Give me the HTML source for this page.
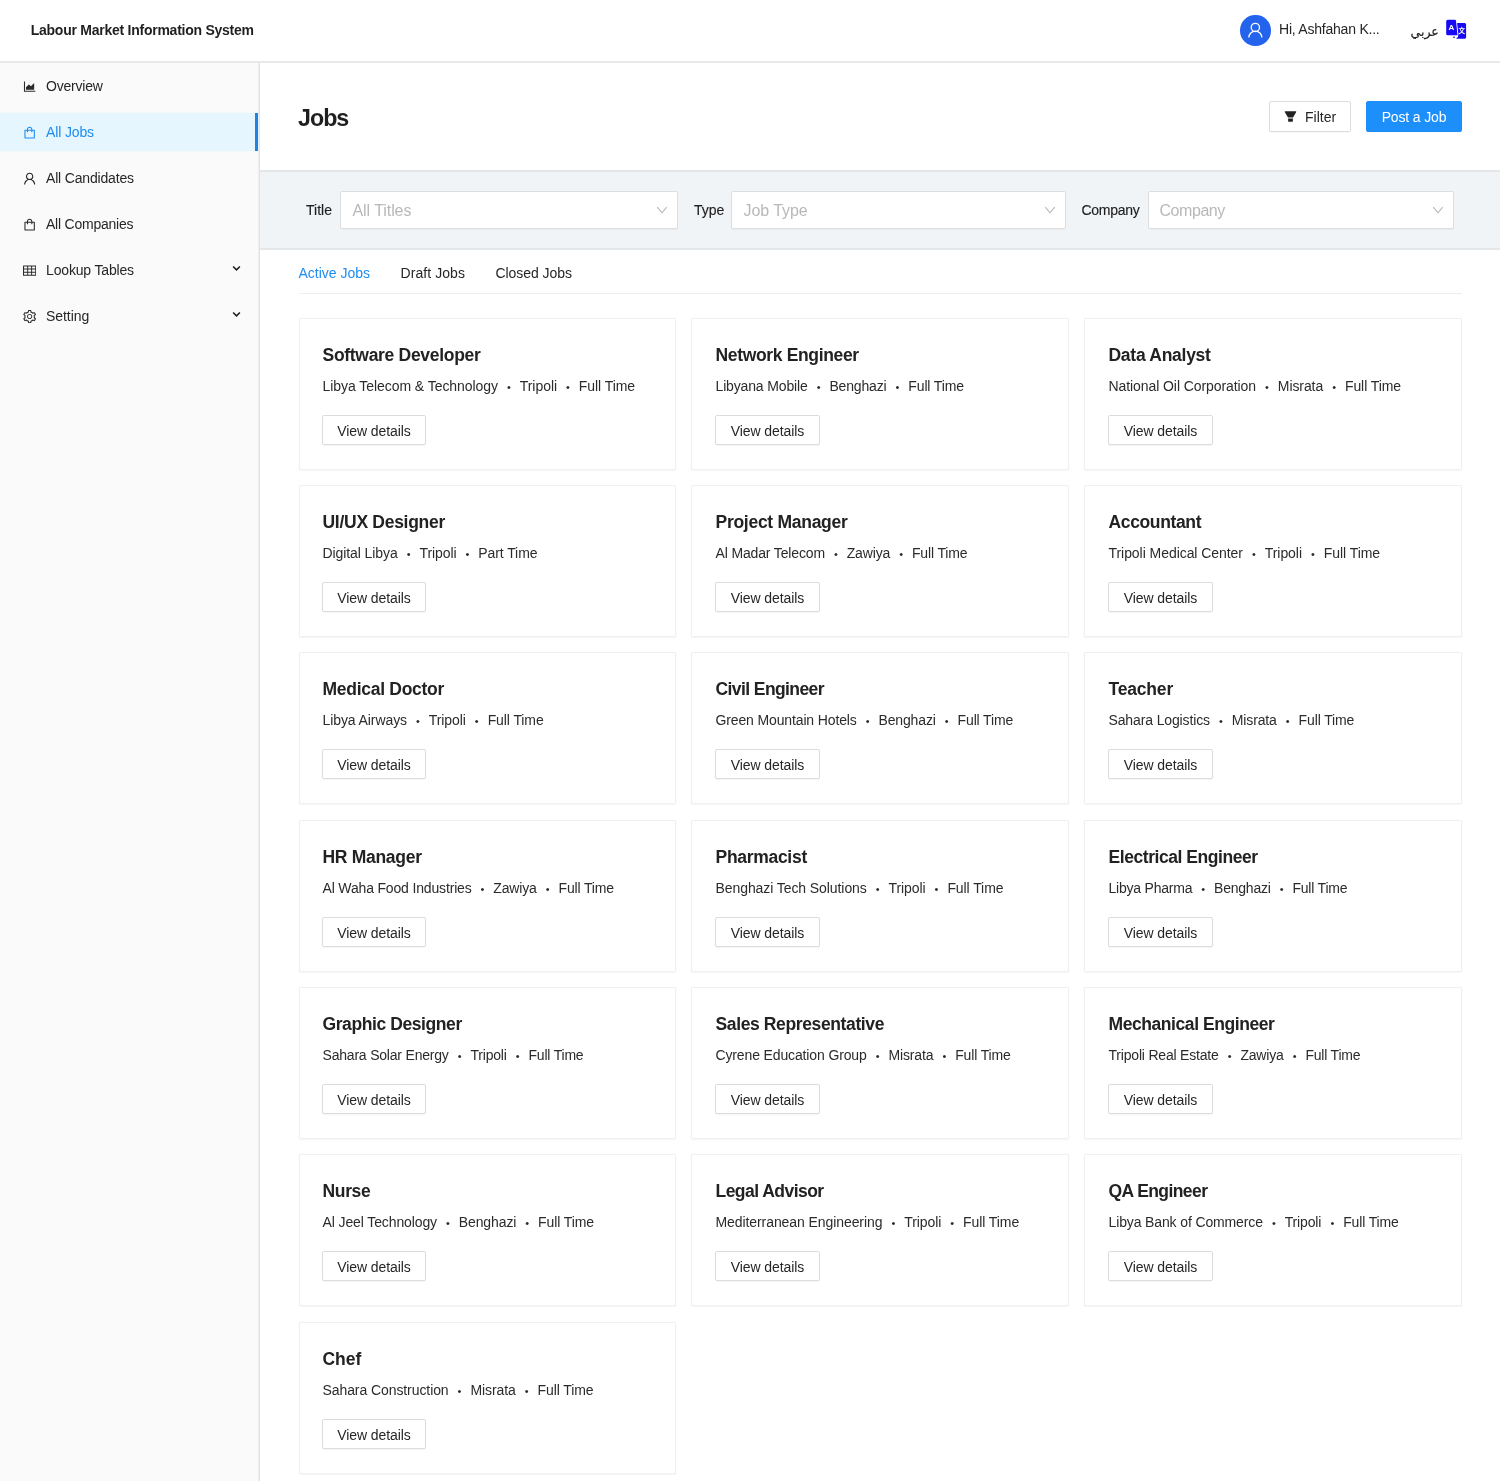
<!DOCTYPE html>
<html lang="en">
<head>
<meta charset="utf-8">
<title>Labour Market Information System - Jobs</title>
<style>
*{box-sizing:border-box;margin:0;padding:0}
html,body{width:1500px;height:1481px;overflow:hidden;background:#fff}
body{will-change:transform;font-family:"Liberation Sans",sans-serif;font-size:14px;color:rgba(0,0,0,.85);position:relative;-webkit-font-smoothing:antialiased}
.abs{position:absolute}
/* header */
#hdr{position:absolute;left:0;top:0;width:1500px;height:63px;background:#fff;border-bottom:2px solid #e9e9e9}
#brand{position:absolute;left:30.700px;top:21.300px;font-weight:700;font-size:14px;letter-spacing:-.25px;line-height:18px;white-space:nowrap;color:#1f1f1f}
#avatar{position:absolute;left:1240.400px;top:15.400px;width:30.500px;height:30.500px;border-radius:50%;background:#2463eb}
#hi{position:absolute;left:1279px;top:20px;letter-spacing:-.22px;font-size:14px;line-height:18px;white-space:nowrap;color:#262626}
#ar{position:absolute;left:1410.500px;top:20.600px;font-family:"DejaVu Sans","Liberation Sans",sans-serif;font-size:12.500px;-webkit-text-stroke:.2px #262626;line-height:22px;white-space:nowrap;color:#262626;direction:rtl}
#lang{position:absolute;left:1440px;top:14px;width:32px;height:30px}
/* sidebar */
#side{position:absolute;left:0;top:63px;width:260px;height:1418px;background:#fafafa;border-right:1px solid #e3e3e3;box-shadow:inset -1px 0 0 #efefef}
.mi{position:absolute;left:0;width:259px;height:40px}
.mi .tx{position:absolute;left:46px;top:11px;line-height:18px;font-size:14px;letter-spacing:-.2px;white-space:nowrap;color:#262626}
.mi svg.ic{position:absolute;left:23px;top:13.800px;width:13.3px;height:13.3px;fill:#2b2b2b}
.mi svg.ar{position:absolute;left:230.700px;top:13px;width:11px;height:11px}
.mi.sel:before{content:"";position:absolute;left:0;top:1px;width:258px;height:38px;background:#e6f6ff}
.mi.sel:after{content:"";position:absolute;left:255px;top:1px;width:3px;height:38px;background:#1c84e6}
.mi.sel .tx{color:#1d8cf0}
.mi.sel svg.ic{fill:#1d8cf0}
/* main */
#h1{position:absolute;left:298px;top:101.5px;font-size:23.25px;font-weight:700;letter-spacing:-1px;line-height:32px;color:#1f1f1f;white-space:nowrap}
.btn{position:absolute;border:1px solid #dcdcdc;border-radius:2px;background:#fff;font-size:14px;color:#262626;white-space:nowrap;box-shadow:0 1px 1px rgba(0,0,0,.03)}
#filter{left:1269px;top:101px;width:82px;height:31px}
#filter span{position:absolute;left:35px;top:6px;line-height:18px}
#filter svg{position:absolute;left:14px;top:8.200px;width:13px;height:13px;fill:#222}
#post{left:1366px;top:101px;width:96px;height:31px;background:#1c8ffa;border-color:#1c8ffa;color:#fff}
#post span{position:absolute;left:0;right:0;top:6px;line-height:18px;text-align:center;letter-spacing:-.15px}
#fbar{position:absolute;left:260px;top:170px;width:1240px;height:80px;background:#f1f4f7;border-top:2px solid #e4e7ea;border-bottom:2px solid #e4e7ea}
.lbl{position:absolute;top:201px;line-height:18px;font-size:14px;color:#1f1f1f;white-space:nowrap;-webkit-text-stroke:.15px #1f1f1f}
.sel2{position:absolute;top:191px;height:38px;background:#fff;border:1px solid #dedede;border-radius:2px;box-shadow:0 1px 0 rgba(0,0,0,.035)}
.sel2 span{position:absolute;left:11.500px;top:9px;font-size:16px;line-height:20px;color:#b8b8b8;white-space:nowrap;letter-spacing:-.07px}
.sel2 svg{position:absolute;right:9px;top:12px;width:12px;height:12px;fill:none;stroke:#b4b4b4;stroke-width:1.050}
.tab{position:absolute;top:263.700px;line-height:18px;font-size:14px;color:#262626;white-space:nowrap}
.tab.on{color:#1d8cf0}
#tabline{position:absolute;left:299px;top:293px;width:1163px;height:1px;background:#eeeeee}
/* cards */
.card{position:absolute;width:377px;height:152px;background:#fff;border:1px solid #f0f0f0;border-radius:1px;box-shadow:0 1px 2px rgba(0,0,0,.045),0 0 1px rgba(0,0,0,.02)}
.card h3{position:absolute;left:22.500px;top:24.200px;font-size:17.5px;font-weight:700;line-height:24px;color:#222;white-space:nowrap;letter-spacing:-.25px}
.card p{position:absolute;left:22.500px;top:57.200px;font-size:14px;line-height:20px;color:#2b2b2b;white-space:nowrap;letter-spacing:-.07px}
.card p i{font-style:normal;display:inline-block;width:21.800px;text-align:center;font-size:11px}
.card .vb{position:absolute;left:22px;top:96px;width:104px;height:30px;border:1px solid #dcdcdc;border-radius:2px;background:#fff;box-shadow:0 1px 1px rgba(0,0,0,.04)}
.card .vb span{position:absolute;left:0;right:0;top:5.500px;text-align:center;line-height:18px;font-size:14px;color:#262626;letter-spacing:-.07px}
.card.s h3,.card.s p{left:23.500px}
.card.s .vb{left:23px;width:105px}
.mi.sel:before{box-shadow:0 0 2px 0 rgba(230,246,255,.9)}
</style>
</head>
<body>
<div id="hdr">
  <div id="brand">Labour Market Information System</div>
  <div id="avatar"><svg viewBox="0 0 31 31" width="30.500" height="30.500" style="display:block"><circle cx="15.600" cy="12.600" r="4.200" fill="none" stroke="#fff" stroke-width="1.300"/><path d="M9 22.900a6.600 6.600 0 0 1 13.200 0" fill="none" stroke="#fff" stroke-width="1.300"/></svg></div>
  <div id="hi">Hi, Ashfahan K...</div>
  <div id="ar">عربي</div>
  <svg id="lang" viewBox="0 0 32 30"><path d="M7.700 5.800h7.200q1 0 1.100 1l1.500 14.500H7.700q-1.500 0-1.500-1.500V7.300q0-1.500 1.500-1.500z" fill="#1708f5"/><path d="M17.100 9h7.500q1.500 0 1.500 1.500v12.700q0 1.500-1.500 1.500H16q2.600-1.500 2.400-4.200z" fill="#1708f5"/><path d="M13 23.200h2" stroke="#14148c" stroke-width="1" fill="none"/><text x="11.300" y="16.200" font-family="Liberation Sans,sans-serif" font-weight="700" font-size="8" fill="#fff" text-anchor="middle">A</text><text x="21.700" y="19" font-family="Noto Sans CJK SC,sans-serif" font-weight="700" font-size="6.500" fill="#fff" text-anchor="middle">文</text></svg>
</div>
<div id="side">
<div class="mi" style="top:3px"><svg class="ic" viewBox="64 64 896 896"><path d="M888 792H200V168c0-4.400-3.600-8-8-8h-56c-4.400 0-8 3.600-8 8v688c0 4.400 3.600 8 8 8h752c4.400 0 8-3.600 8-8v-56c0-4.400-3.600-8-8-8zm-616-64h536c4.400 0 8-3.600 8-8V284c0-7.200-8.700-10.700-13.700-5.700L592 488.600l-125.400-124a8.030 8.030 0 0 0-11.300 0l-189 189.600a7.870 7.870 0 0 0-2.300 5.600V720c0 4.400 3.600 8 8 8z"/></svg><span class="tx" style="letter-spacing:-0.2px">Overview</span></div>
<div class="mi sel" style="top:49px"><svg class="ic" viewBox="64 64 896 896"><path d="M832 312H696v-16c0-101.600-82.400-184-184-184s-184 82.400-184 184v16H192c-17.700 0-32 14.300-32 32v536c0 17.700 14.300 32 32 32h640c17.700 0 32-14.300 32-32V344c0-17.700-14.300-32-32-32zm-432-16c0-61.900 50.100-112 112-112s112 50.100 112 112v16H400v-16zm392 544H232V384h96v88c0 4.400 3.600 8 8 8h56c4.400 0 8-3.600 8-8v-88h224v88c0 4.400 3.600 8 8 8h56c4.400 0 8-3.600 8-8v-88h96v456z"/></svg><span class="tx" style="letter-spacing:-0.13px">All Jobs</span></div>
<div class="mi" style="top:95px"><svg class="ic" viewBox="64 64 896 896"><path d="M858.500 763.600a374 374 0 0 0-80.600-119.500 375.630 375.630 0 0 0-119.500-80.600c-.4-.2-.8-.3-1.200-.5C719.500 518 760 444.700 760 362c0-137-111-248-248-248S264 225 264 362c0 82.700 40.500 156 102.800 201.100-.4.200-.8.300-1.200.5-44.800 18.900-85 46-119.500 80.600a375.630 375.630 0 0 0-80.600 119.500A371.700 371.700 0 0 0 136 901.800a8 8 0 0 0 8 8.200h60c4.400 0 7.900-3.500 8-7.800 2-77.200 33-149.500 87.800-204.300 56.700-56.700 132-87.900 212.200-87.900s155.500 31.200 212.200 87.900C779 752.700 810 825 812 902.200c.1 4.400 3.600 7.800 8 7.800h60a8 8 0 0 0 8-8.200c-1-47.800-10.900-94.300-29.500-138.200zM512 534c-45.900 0-89.100-17.900-121.600-50.400S340 407.900 340 362c0-45.900 17.900-89.100 50.400-121.600S466.100 190 512 190s89.100 17.900 121.600 50.400S684 316.100 684 362c0 45.900-17.900 89.100-50.400 121.600S557.900 534 512 534z"/></svg><span class="tx" style="letter-spacing:-0.17px">All Candidates</span></div>
<div class="mi" style="top:141px"><svg class="ic" viewBox="64 64 896 896"><path d="M832 312H696v-16c0-101.600-82.400-184-184-184s-184 82.400-184 184v16H192c-17.700 0-32 14.300-32 32v536c0 17.700 14.300 32 32 32h640c17.700 0 32-14.300 32-32V344c0-17.700-14.300-32-32-32zm-432-16c0-61.900 50.100-112 112-112s112 50.100 112 112v16H400v-16zm392 544H232V384h96v88c0 4.400 3.600 8 8 8h56c4.400 0 8-3.600 8-8v-88h224v88c0 4.400 3.600 8 8 8h56c4.400 0 8-3.600 8-8v-88h96v456z"/></svg><span class="tx" style="letter-spacing:-0.23px">All Companies</span></div>
<div class="mi" style="top:187px"><svg class="ic" viewBox="64 64 896 896"><path d="M928 160H96c-17.700 0-32 14.300-32 32v640c0 17.700 14.300 32 32 32h832c17.700 0 32-14.300 32-32V192c0-17.700-14.300-32-32-32zm-40 208H676V232h212v136zm0 224H676V432h212v160zM412 432h200v160H412V432zm200-64H412V232h200v136zm-476 64h212v160H136V432zm0-200h212v136H136V232zm0 424h212v136H136V656zm276 0h200v136H412V656zm476 136H676V656h212v136z"/></svg><span class="tx" style="letter-spacing:-0.16px">Lookup Tables</span><svg class="ar" viewBox="0 0 11 11"><path d="M2.100 3.500 5.500 6.900 8.900 3.500" fill="none" stroke="#1c1c1c" stroke-width="1.500"/></svg></div>
<div class="mi" style="top:233px"><svg class="ic" viewBox="64 64 896 896"><path d="M924.800 625.700l-65.500-56c3.100-19 4.700-38.400 4.700-57.800s-1.600-38.800-4.700-57.800l65.500-56a32.030 32.030 0 0 0 9.300-35.200l-.9-2.600a442.090 442.090 0 0 0-79.700-137.900l-1.800-2.100a32.120 32.120 0 0 0-35.100-9.500l-81.300 28.900c-30-24.600-63.500-44-99.700-57.600l-15.700-85a32.050 32.050 0 0 0-25.800-25.700l-2.700-.5c-52.100-9.400-106.900-9.400-159 0l-2.700.5a32.050 32.050 0 0 0-25.800 25.700l-15.800 85.400a351.860 351.860 0 0 0-99 57.400l-81.900-29.100a32 32 0 0 0-35.100 9.500l-1.800 2.100a446.020 446.020 0 0 0-79.700 137.900l-.9 2.600c-4.500 12.500-.8 26.500 9.300 35.200l66.300 56.600c-3.100 18.800-4.600 38-4.600 57.100 0 19.200 1.500 38.400 4.600 57.100L99 625.500a32.030 32.030 0 0 0-9.300 35.200l.9 2.600c18.100 50.400 44.900 96.900 79.700 137.900l1.800 2.100a32.120 32.120 0 0 0 35.100 9.500l81.900-29.100c29.800 24.500 63.100 43.900 99 57.400l15.800 85.400a32.050 32.050 0 0 0 25.800 25.700l2.700.5a449.400 449.400 0 0 0 159 0l2.700-.5a32.050 32.050 0 0 0 25.800-25.700l15.700-85a350 350 0 0 0 99.700-57.600l81.300 28.900a32 32 0 0 0 35.100-9.500l1.800-2.100c34.800-41.100 61.600-87.500 79.700-137.900l.9-2.600c4.500-12.300.8-26.300-9.300-35zM788.300 465.900c2.500 15.100 3.800 30.600 3.800 46.100s-1.300 31-3.800 46.100l-6.600 40.100 74.700 63.900a370.030 370.030 0 0 1-42.600 73.600L721 702.800l-31.400 25.800c-23.900 19.600-50.500 35-79.300 45.800l-38.100 14.300-17.900 97a377.500 377.500 0 0 1-85 0l-17.900-97.200-37.800-14.500c-28.500-10.800-55-26.200-78.700-45.700l-31.400-25.900-93.400 33.200c-17-22.900-31.200-47.600-42.600-73.600l75.500-64.500-6.500-40c-2.400-14.900-3.700-30.300-3.700-45.500 0-15.300 1.200-30.600 3.700-45.500l6.500-40-75.500-64.500c11.300-26.100 25.600-50.700 42.600-73.600l93.400 33.200 31.400-25.900c23.700-19.500 50.200-34.900 78.700-45.700l37.900-14.300 17.900-97.200c28.100-3.200 56.800-3.200 85 0l17.900 97 38.100 14.300c28.700 10.800 55.400 26.200 79.300 45.800l31.400 25.800 92.800-32.900c17 22.900 31.200 47.600 42.600 73.600L781.800 426l6.500 39.900zM512 326c-97.200 0-176 78.800-176 176s78.800 176 176 176 176-78.800 176-176-78.800-176-176-176zm79.200 255.200A111.600 111.600 0 0 1 512 614c-29.900 0-58-11.700-79.200-32.800A111.600 111.600 0 0 1 400 502c0-29.900 11.700-58 32.800-79.200C454 401.600 482.100 390 512 390c29.900 0 58 11.600 79.200 32.800A111.600 111.600 0 0 1 624 502c0 29.900-11.700 58-32.800 79.200z"/></svg><span class="tx" style="letter-spacing:-0.05px">Setting</span><svg class="ar" viewBox="0 0 11 11"><path d="M2.100 3.500 5.500 6.900 8.900 3.500" fill="none" stroke="#1c1c1c" stroke-width="1.500"/></svg></div>
</div>
<div id="main">
<div id="h1">Jobs</div>
<div class="btn" id="filter"><svg class="fi" viewBox="64 64 896 896"><path d="M349 838c0 17.700 14.200 32 31.800 32h262.400c17.600 0 31.800-14.300 31.800-32V642H349v196zm531.100-684H143.900c-24.500 0-39.800 26.700-27.500 48l221.300 376h348.800l221.300-376c12.100-21.300-3.200-48-27.700-48z"/></svg><span>Filter</span></div>
<div class="btn" id="post"><span>Post a Job</span></div>
<div id="fbar"></div>
<div class="lbl" style="left:306px">Title</div>
<div class="sel2" style="left:340px;width:338px"><span>All Titles</span><svg viewBox="0 0 12 12"><path d="M1.300 3.200 6 8.800 10.700 3.200"/></svg></div>
<div class="lbl" style="left:694px">Type</div>
<div class="sel2" style="left:731px;width:335px"><span>Job Type</span><svg viewBox="0 0 12 12"><path d="M1.300 3.200 6 8.800 10.700 3.200"/></svg></div>
<div class="lbl" style="left:1081.500px;letter-spacing:-.28px">Company</div>
<div class="sel2" style="left:1148px;width:306px"><span style="left:10.500px;letter-spacing:-.45px">Company</span><svg viewBox="0 0 12 12"><path d="M1.300 3.200 6 8.800 10.700 3.200"/></svg></div>
<div class="tab on" style="left:298.500px">Active Jobs</div>
<div class="tab" style="left:400.500px;letter-spacing:.07px">Draft Jobs</div>
<div class="tab" style="left:495.500px;letter-spacing:-.05px">Closed Jobs</div>
<div id="tabline"></div>
<div class="card" style="left:299px;top:318px;width:377px"><h3 style="letter-spacing:-0.297px">Software Developer</h3><p style="letter-spacing:-0.056px">Libya Telecom &amp; Technology<i>&bull;</i>Tripoli<i>&bull;</i>Full Time</p><div class="vb"><span>View details</span></div></div>
<div class="card s" style="left:691px;top:318px;width:378px"><h3 style="letter-spacing:-0.343px">Network Engineer</h3><p style="letter-spacing:-0.150px">Libyana Mobile<i>&bull;</i>Benghazi<i>&bull;</i>Full Time</p><div class="vb"><span>View details</span></div></div>
<div class="card s" style="left:1084px;top:318px;width:378px"><h3 style="letter-spacing:-0.269px">Data Analyst</h3><p style="letter-spacing:-0.080px">National Oil Corporation<i>&bull;</i>Misrata<i>&bull;</i>Full Time</p><div class="vb"><span>View details</span></div></div>
<div class="card" style="left:299px;top:485px;width:377px"><h3 style="letter-spacing:-0.281px">UI/UX Designer</h3><p style="letter-spacing:-0.084px">Digital Libya<i>&bull;</i>Tripoli<i>&bull;</i>Part Time</p><div class="vb"><span>View details</span></div></div>
<div class="card s" style="left:691px;top:485px;width:378px"><h3 style="letter-spacing:-0.278px">Project Manager</h3><p style="letter-spacing:-0.150px">Al Madar Telecom<i>&bull;</i>Zawiya<i>&bull;</i>Full Time</p><div class="vb"><span>View details</span></div></div>
<div class="card s" style="left:1084px;top:485px;width:378px"><h3 style="letter-spacing:-0.361px">Accountant</h3><p style="letter-spacing:-0.054px">Tripoli Medical Center<i>&bull;</i>Tripoli<i>&bull;</i>Full Time</p><div class="vb"><span>View details</span></div></div>
<div class="card" style="left:299px;top:652px;width:377px"><h3 style="letter-spacing:-0.281px">Medical Doctor</h3><p style="letter-spacing:-0.084px">Libya Airways<i>&bull;</i>Tripoli<i>&bull;</i>Full Time</p><div class="vb"><span>View details</span></div></div>
<div class="card s" style="left:691px;top:652px;width:378px"><h3 style="letter-spacing:-0.588px">Civil Engineer</h3><p style="letter-spacing:-0.134px">Green Mountain Hotels<i>&bull;</i>Benghazi<i>&bull;</i>Full Time</p><div class="vb"><span>View details</span></div></div>
<div class="card s" style="left:1084px;top:652px;width:378px"><h3 style="letter-spacing:-0.183px">Teacher</h3><p style="letter-spacing:-0.128px">Sahara Logistics<i>&bull;</i>Misrata<i>&bull;</i>Full Time</p><div class="vb"><span>View details</span></div></div>
<div class="card" style="left:299px;top:820px;width:377px"><h3 style="letter-spacing:-0.295px">HR Manager</h3><p style="letter-spacing:-0.162px">Al Waha Food Industries<i>&bull;</i>Zawiya<i>&bull;</i>Full Time</p><div class="vb"><span>View details</span></div></div>
<div class="card s" style="left:691px;top:820px;width:378px"><h3 style="letter-spacing:-0.294px">Pharmacist</h3><p style="letter-spacing:-0.080px">Benghazi Tech Solutions<i>&bull;</i>Tripoli<i>&bull;</i>Full Time</p><div class="vb"><span>View details</span></div></div>
<div class="card s" style="left:1084px;top:820px;width:378px"><h3 style="letter-spacing:-0.439px">Electrical Engineer</h3><p style="letter-spacing:-0.220px">Libya Pharma<i>&bull;</i>Benghazi<i>&bull;</i>Full Time</p><div class="vb"><span>View details</span></div></div>
<div class="card" style="left:299px;top:987px;width:377px"><h3 style="letter-spacing:-0.410px">Graphic Designer</h3><p style="letter-spacing:-0.200px">Sahara Solar Energy<i>&bull;</i>Tripoli<i>&bull;</i>Full Time</p><div class="vb"><span>View details</span></div></div>
<div class="card s" style="left:691px;top:987px;width:378px"><h3 style="letter-spacing:-0.376px">Sales Representative</h3><p style="letter-spacing:-0.135px">Cyrene Education Group<i>&bull;</i>Misrata<i>&bull;</i>Full Time</p><div class="vb"><span>View details</span></div></div>
<div class="card s" style="left:1084px;top:987px;width:378px"><h3 style="letter-spacing:-0.428px">Mechanical Engineer</h3><p style="letter-spacing:-0.197px">Tripoli Real Estate<i>&bull;</i>Zawiya<i>&bull;</i>Full Time</p><div class="vb"><span>View details</span></div></div>
<div class="card" style="left:299px;top:1154px;width:377px"><h3 style="letter-spacing:-0.350px">Nurse</h3><p style="letter-spacing:-0.111px">Al Jeel Technology<i>&bull;</i>Benghazi<i>&bull;</i>Full Time</p><div class="vb"><span>View details</span></div></div>
<div class="card s" style="left:691px;top:1154px;width:378px"><h3 style="letter-spacing:-0.534px">Legal Advisor</h3><p style="letter-spacing:-0.080px">Mediterranean Engineering<i>&bull;</i>Tripoli<i>&bull;</i>Full Time</p><div class="vb"><span>View details</span></div></div>
<div class="card s" style="left:1084px;top:1154px;width:378px"><h3 style="letter-spacing:-0.590px">QA Engineer</h3><p style="letter-spacing:-0.129px">Libya Bank of Commerce<i>&bull;</i>Tripoli<i>&bull;</i>Full Time</p><div class="vb"><span>View details</span></div></div>
<div class="card" style="left:299px;top:1322px;width:377px"><h3 style="letter-spacing:-0.050px">Chef</h3><p style="letter-spacing:-0.082px">Sahara Construction<i>&bull;</i>Misrata<i>&bull;</i>Full Time</p><div class="vb"><span>View details</span></div></div>
</div>
</body>
</html>
